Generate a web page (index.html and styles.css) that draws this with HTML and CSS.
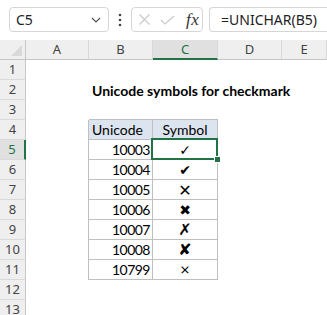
FILE: index.html
```html
<!DOCTYPE html>
<html lang="en">

<head>
    <meta charset="UTF-8">
    <meta name="viewport" content="width=device-width, initial-scale=1.0">
    <title>Unicode symbols for checkmark</title>
    <link rel="stylesheet" href="styles.css">
</head>

<body>
    <div class="toolbar">
        <div class="name-box">
            <span>C5</span>
            <svg class="chevron" width="10" height="6" viewBox="0 0 10 6">
                <path d="M1 1 L5 5 L9 1" fill="none" stroke="#555" stroke-width="1.2" />
            </svg>
        </div>
        <svg class="dots" width="4" height="14" viewBox="0 0 4 14">
            <circle cx="2" cy="2" r="1.3" fill="#444" />
            <circle cx="2" cy="7" r="1.3" fill="#444" />
            <circle cx="2" cy="12" r="1.3" fill="#444" />
        </svg>
        <div class="fx-box">
            <svg width="11" height="11" viewBox="0 0 11 11">
                <path d="M0.5 0.5 L10.5 10.5 M10.5 0.5 L0.5 10.5" stroke="#c8c8c8" stroke-width="1.1" />
            </svg>
            <svg width="15" height="10" viewBox="0 0 15 10">
                <path d="M1 5 L5 9 L14 1" fill="none" stroke="#c8c8c8" stroke-width="1.1" />
            </svg>
            <span class="fx">fx</span>
        </div>
        <div class="formula-box">=UNICHAR(B5)</div>
    </div>

    <div class="sheet">
        <div class="corner"></div>
        <div class="col-head">A</div>
        <div class="col-head">B</div>
        <div class="col-head active">C</div>
        <div class="col-head">D</div>
        <div class="col-head">E</div>

        <div class="row-head">1</div>
        <div class="cell"></div><div class="cell"></div><div class="cell"></div><div class="cell"></div><div class="cell"></div>

        <div class="row-head">2</div>
        <div class="cell"></div>
        <div class="cell title">Unicode symbols for checkmark</div>
        <div class="cell"></div><div class="cell"></div><div class="cell"></div>

        <div class="row-head">3</div>
        <div class="cell"></div>
        <div class="cell above"></div><div class="cell above"></div>
        <div class="cell"></div><div class="cell"></div>

        <div class="row-head">4</div>
        <div class="cell before"></div>
        <div class="cell tbl head left">Unicode</div>
        <div class="cell tbl head center">Symbol</div>
        <div class="cell"></div><div class="cell"></div>

        <div class="row-head active">5</div>
        <div class="cell before"></div>
        <div class="cell tbl num">10003</div>
        <div class="cell tbl sym selected">&#x2713;<span class="handle"></span></div>
        <div class="cell"></div><div class="cell"></div>

        <div class="row-head">6</div>
        <div class="cell before"></div>
        <div class="cell tbl num">10004</div>
        <div class="cell tbl sym">&#x2714;</div>
        <div class="cell"></div><div class="cell"></div>

        <div class="row-head">7</div>
        <div class="cell before"></div>
        <div class="cell tbl num">10005</div>
        <div class="cell tbl sym big">&#x2715;</div>
        <div class="cell"></div><div class="cell"></div>

        <div class="row-head">8</div>
        <div class="cell before"></div>
        <div class="cell tbl num">10006</div>
        <div class="cell tbl sym">&#x2716;</div>
        <div class="cell"></div><div class="cell"></div>

        <div class="row-head">9</div>
        <div class="cell before"></div>
        <div class="cell tbl num">10007</div>
        <div class="cell tbl sym tall">&#x2717;</div>
        <div class="cell"></div><div class="cell"></div>

        <div class="row-head">10</div>
        <div class="cell before"></div>
        <div class="cell tbl num">10008</div>
        <div class="cell tbl sym tall">&#x2718;</div>
        <div class="cell"></div><div class="cell"></div>

        <div class="row-head">11</div>
        <div class="cell before"></div>
        <div class="cell tbl num">10799</div>
        <div class="cell tbl sym small">&#x2A2F;</div>
        <div class="cell"></div><div class="cell"></div>

        <div class="row-head">12</div>
        <div class="cell"></div><div class="cell"></div><div class="cell"></div><div class="cell"></div><div class="cell"></div>

        <div class="row-head">13</div>
        <div class="cell"></div><div class="cell"></div><div class="cell"></div><div class="cell"></div><div class="cell"></div>
    </div>
</body>

</html>
```

FILE: styles.css
```css
body {
    margin: 0;
    padding: 0;
    width: 327px;
    height: 315px;
    overflow: hidden;
    background-color: #fff;
    font-family: 'Noto Sans', 'Open Sans', sans-serif;
}

.toolbar {
    height: 40px;
    display: flex;
    align-items: flex-start;
    padding: 7px 0 0 9px;
    box-sizing: border-box;
    background-color: #fff;
}

.name-box {
    width: 100px;
    height: 25px;
    box-sizing: border-box;
    border: 1px solid #d6d6d6;
    border-radius: 4px;
    display: flex;
    align-items: center;
    justify-content: space-between;
    padding: 0 7px 0 6px;
    font-size: 14px;
    color: #222;
}

.chevron {
    margin-top: 1px;
}

.dots {
    margin: 6px 9px 0 9px;
}

.fx-box {
    width: 72px;
    height: 25px;
    box-sizing: border-box;
    border: 1px solid #d6d6d6;
    border-radius: 4px;
    display: flex;
    align-items: center;
    gap: 10px;
    padding-left: 7px;
}

.fx {
    font-family: 'Liberation Serif', serif;
    font-style: italic;
    font-size: 17px;
    color: #333;
    margin-left: 1px;
    letter-spacing: 0.5px;
}

.formula-box {
    flex: 1;
    height: 25px;
    margin-left: 6px;
    box-sizing: border-box;
    border: 1px solid #d6d6d6;
    border-right: none;
    border-radius: 4px 0 0 4px;
    padding-left: 11px;
    font-size: 14px;
    line-height: 23px;
    color: #222;
}

.sheet {
    display: grid;
    grid-template-columns: 26px 63px 64px 65px 64px 1fr;
    grid-auto-rows: 20px;
    font-family: 'Lato', 'Liberation Sans', sans-serif;
    font-size: 14px;
}

.corner {
    background-color: #efefef;
    border-right: 1px solid #c6c6c6;
    border-bottom: 1px solid #c6c6c6;
    box-sizing: border-box;
    position: relative;
}

.corner::after {
    content: '';
    position: absolute;
    right: 3px;
    bottom: 3px;
    width: 0;
    height: 0;
    border-left: 11px solid transparent;
    border-bottom: 11px solid #d9d9d9;
}

.col-head {
    background-color: #efefef;
    border-right: 1px solid #d9d9d9;
    border-bottom: 1px solid #c6c6c6;
    box-sizing: border-box;
    text-align: center;
    font-family: 'Noto Sans', sans-serif;
    font-size: 13px;
    line-height: 19px;
    color: #444;
}

.col-head.active {
    background-color: #e0e0e0;
    border-bottom: 2px solid #217346;
    color: #217346;
}

.row-head {
    background-color: #efefef;
    border-right: 1px solid #c6c6c6;
    border-bottom: 1px solid #d9d9d9;
    box-sizing: border-box;
    text-align: center;
    font-family: 'Noto Sans', sans-serif;
    font-size: 13px;
    line-height: 19px;
    color: #444;
}

.row-head.active {
    background-color: #e0e0e0;
    border-right: 2px solid #217346;
    color: #217346;
}

.cell {
    box-sizing: border-box;
    line-height: 21px;
    color: #000;
    white-space: nowrap;
}

.title {
    font-weight: bold;
    padding-left: 3px;
    overflow: visible;
}

.above {
    border-bottom: 1px solid #bfbfbf;
}

.before {
    border-right: 1px solid #bfbfbf;
}

.tbl {
    border-right: 1px solid #bfbfbf;
    border-bottom: 1px solid #bfbfbf;
    line-height: 20px;
}

.head {
    background-color: #dce4ef;
}

.left {
    padding-left: 3px;
}

.center {
    text-align: center;
}

.num {
    text-align: right;
    padding-right: 2px;
    letter-spacing: -0.5px;
}

.sym {
    text-align: center;
    font-family: 'DejaVu Sans', sans-serif;
    font-size: 14px;
}

.sym.big {
    font-family: 'Noto Sans CJK SC', 'DejaVu Sans', sans-serif;
    font-size: 16px;
    line-height: 19px;
}

.sym.tall {
    font-size: 16px;
}

.sym.small {
    font-size: 13px;
}

.selected {
    position: relative;
}

.selected::before {
    content: '';
    position: absolute;
    left: -2px;
    top: -2px;
    right: -1px;
    bottom: -1px;
    border: 2px solid #217346;
}

.handle {
    position: absolute;
    right: -4px;
    bottom: -4px;
    width: 5px;
    height: 5px;
    background-color: #217346;
    border: 1px solid #fff;
}
```
